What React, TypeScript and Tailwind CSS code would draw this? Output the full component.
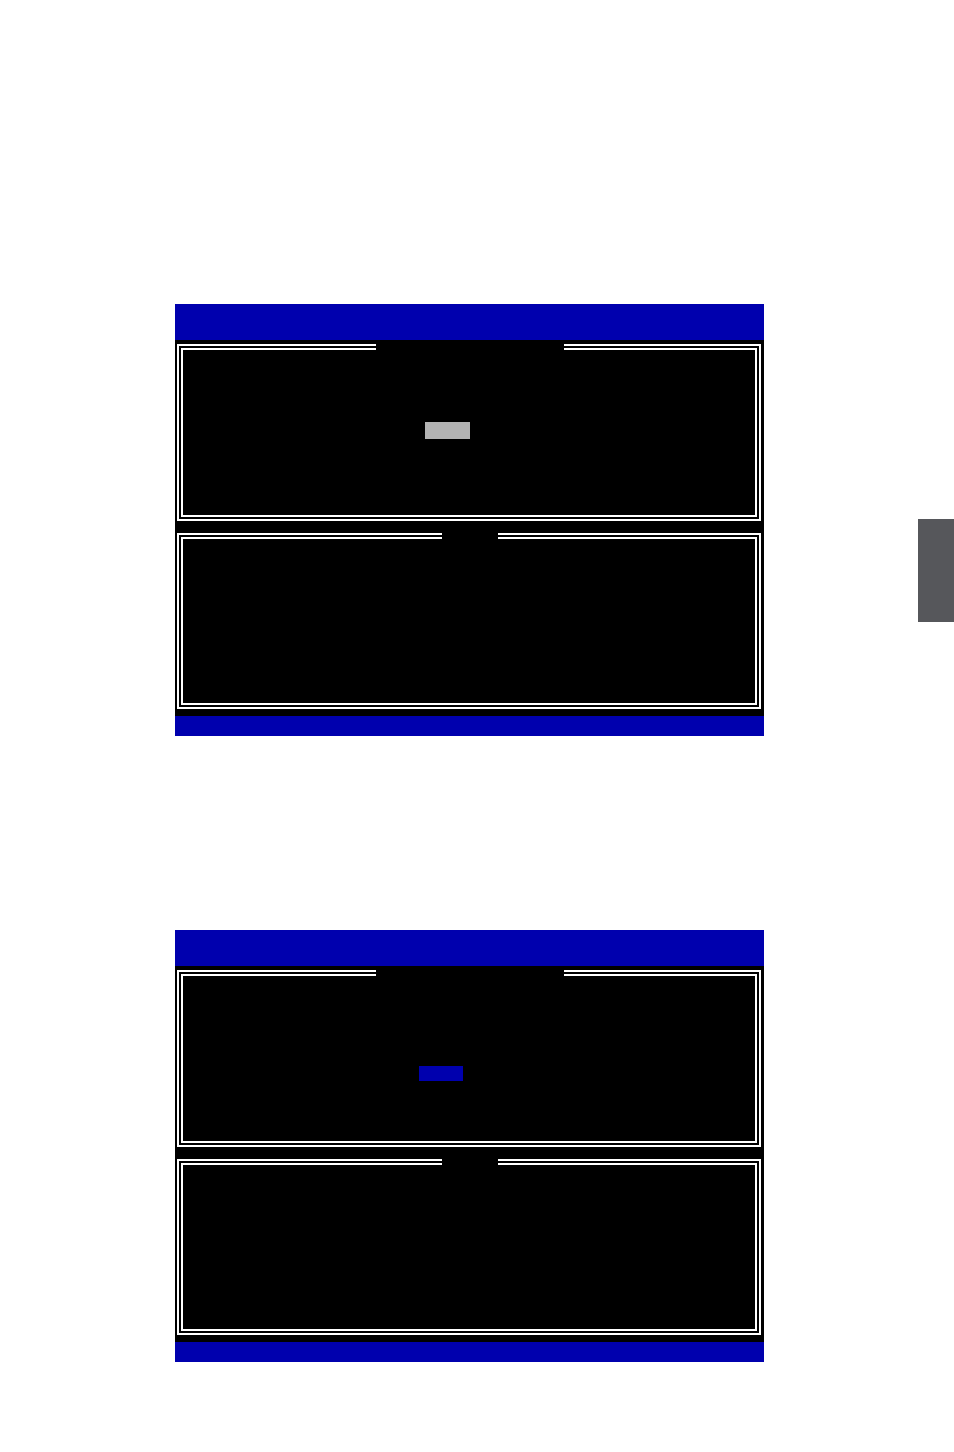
import React from "react";

type Mark = { left: number; top: number; w: number; h: number; color: string };

function DoubleBox({
  height,
  gapLeft,
  gapWidth,
  mark,
}: {
  height: number;
  gapLeft: number;
  gapWidth: number;
  mark?: Mark;
}) {
  return (
    <div className="relative border-2 border-white p-[2px]" style={{ height }}>
      <div className="h-full border-2 border-white">
        {mark && (
          <div
            style={{
              marginLeft: mark.left,
              paddingTop: mark.top,
            }}
          >
            <div style={{ width: mark.w, height: mark.h, background: mark.color }} />
          </div>
        )}
      </div>
      {/* title notch cut into the top frame */}
      <div
        className="absolute top-[-2px] h-[8px] bg-black"
        style={{ left: gapLeft, width: gapWidth }}
      />
    </div>
  );
}

function BiosScreen({ mark }: { mark: Mark }) {
  return (
    <div className="flex h-[432px] w-[589px] flex-col bg-black">
      <div className="h-[36px] bg-[#0000ae]" />
      <div className="flex flex-1 flex-col pl-[2px] pr-[3px] pt-[4px]">
        <DoubleBox height={177} gapLeft={197} gapWidth={188} mark={mark} />
        <div className="h-[12px]" />
        <DoubleBox height={176} gapLeft={263} gapWidth={56} />
      </div>
      <div className="h-[20px] bg-[#0000ae]" />
    </div>
  );
}

export default function App() {
  return (
    <div className="relative h-[1452px] w-[954px] bg-white">
      <div className="flex flex-col gap-[194px] pl-[175px] pt-[304px]">
        <BiosScreen mark={{ left: 242, top: 72, w: 45, h: 17, color: "#b3b3b3" }} />
        <BiosScreen mark={{ left: 236, top: 90, w: 44, h: 15, color: "#0000ae" }} />
      </div>
      <div className="absolute right-0 top-[519px] h-[103px] w-[36px] bg-[#56575b]" />
    </div>
  );
}
